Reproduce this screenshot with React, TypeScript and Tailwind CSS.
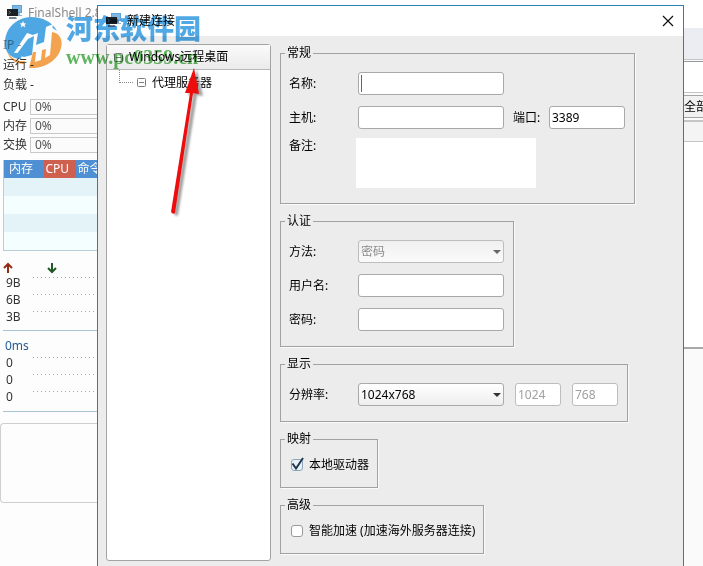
import React, { useState } from "react";

const field =
  "h-[23px] rounded-[3px] border border-[#a9a9a9] bg-white px-[2px] text-xs text-black outline-none disabled:border-[#bdbdbd] disabled:text-[#a0a0a0]";

function AppIcon() {
  return (
    <svg className="h-4 w-4 shrink-0" viewBox="0 0 16 16">
      <rect x="5" y="0" width="10" height="8" fill="#5fa3d6" />
      <rect x="6" y="1" width="8" height="6" fill="#7db7e2" />
      <rect x="0" y="4" width="11" height="7" fill="#1c1f24" />
      <path d="M1.500 6l2 1.500-2 1.500" stroke="#aeb6bd" fill="none" strokeWidth=".6" />
      <path d="M2 12h7l1 2H2z" fill="#77828b" />
      <path d="M11 8h2v2h2v1h-4z" fill="#8fb2cc" />
    </svg>
  );
}

function Meter({ label, value }: { label: string; value: string }) {
  return (
    <div className="flex h-[19px] items-center">
      <span className="w-[27px] shrink-0">{label}</span>
      <span className="h-4 flex-1 border border-r-0 border-[#c9c9c9] bg-[#fbfbfb] pl-1 leading-[14px] text-[#555]">
        {value}
      </span>
    </div>
  );
}

function ScaleRow({ label }: { label: string }) {
  return (
    <div className="flex h-[17px] items-start gap-2 pr-[2px] pl-[3px]">
      <span className="w-[19px] leading-[17px]">{label}</span>
      <svg className="mt-[3px] h-px min-w-0 flex-1">
        <path d="M0 .5h400" stroke="#a8a8a8" strokeDasharray="1 3" />
      </svg>
    </div>
  );
}

function Sidebar() {
  return (
    <aside className="flex w-[97px] shrink-0 flex-col overflow-hidden bg-[#fdfdfd] text-[#333]">
      <div className="flex h-[34px] items-start gap-1 pt-[5px] pl-[7px]">
        <AppIcon />
        <span className="pl-px leading-4 whitespace-nowrap text-[#8a8a8a]">FinalShell 2.8</span>
      </div>
      <div className="flex flex-col pl-[3px]">
        <span className="h-[21px] leading-[21px] text-[#999]">IP -</span>
        <span className="h-5 leading-5">运行 -</span>
        <span className="h-[22px] leading-5">负载 -</span>
        <Meter label="CPU" value="0%" />
        <Meter label="内存" value="0%" />
        <Meter label="交换" value="0%" />
        <table className="mt-[6px] w-[120px] border-collapse border-b border-l border-[#b9cdd6]">
          <thead>
            <tr className="h-[18px] bg-[#4f8fd3] text-left text-white">
              <th className="w-10 p-0 pl-[5px] leading-[18px] font-normal">内存</th>
              <th className="w-8 bg-[#cf5f4f] p-0 pl-[2px] leading-[18px] font-normal">CPU</th>
              <th className="p-0 pl-[2px] leading-[18px] font-normal">命令</th>
            </tr>
          </thead>
          <tbody>
            {[0, 1].map((i) => (
              <React.Fragment key={i}>
                <tr className="h-[18px] bg-[#e3f3f8]">
                  <td colSpan={3} className="p-0" />
                </tr>
                <tr className="h-[18px] bg-[#f5feff]">
                  <td colSpan={3} className="p-0" />
                </tr>
              </React.Fragment>
            ))}
          </tbody>
        </table>
      </div>
      <div className="mt-[11px] flex gap-8 pl-[3px]">
        <svg className="h-3 w-3" viewBox="0 0 12 12" fill="none" stroke="#952a14" strokeWidth="2">
          <path d="M5 11V2M1 6l4-4 4 4" />
        </svg>
        <svg className="h-3 w-3" viewBox="0 0 12 12" fill="none" stroke="#1f5a22" strokeWidth="2">
          <path d="M5 1v9M1 6l4 4 4-4" />
        </svg>
      </div>
      <div className="ml-[3px] flex flex-col border-b border-[#a9c3d3] pb-[5px]">
        <ScaleRow label="9B" />
        <ScaleRow label="6B" />
        <ScaleRow label="3B" />
      </div>
      <div className="ml-[3px] flex flex-col border-b border-[#a9c3d3] pt-[7px] pb-[6px]">
        <span className="pl-[2px] leading-4 text-[#245a94]">0ms</span>
        <ScaleRow label="0" />
        <ScaleRow label="0" />
        <ScaleRow label="0" />
      </div>
      <div className="mt-[11px] h-20 rounded-l-sm border border-r-0 border-[#cfcfcf] bg-[#fdfdfd]" />
    </aside>
  );
}

function Expander() {
  return (
    <svg className="h-[9px] w-[9px] shrink-0" viewBox="0 0 9 9" fill="#fff" stroke="#7c7c7c">
      <rect x=".5" y=".5" width="8" height="8" rx="1" />
      <path d="M2 4.5h5" />
    </svg>
  );
}

function Tree() {
  return (
    <nav className="mb-[5px] flex w-[165px] shrink-0 flex-col rounded-[3px] border border-[#a3a3a3] bg-white">
      <button className="flex h-[25px] items-center gap-[6px] border-b border-[#b8b8b8] bg-linear-to-b from-[#fafafa] to-[#ebebeb] pl-[7px]">
        <Expander />
        Windows远程桌面
      </button>
      <div className="flex h-[25px]">
        <span className="ml-[12px] h-[13px] w-[14px] border-b border-l border-dotted border-[#888]" />
        <button className="ml-1 flex items-center gap-[6px]">
          <Expander />
          代理服务器
        </button>
      </div>
    </nav>
  );
}

function Group({ title, children }: { title: string; children: React.ReactNode }) {
  return (
    <fieldset className="border border-[#a2a2a2] px-1 pb-[15px] shadow-[1px_1px_0_#fafafa]">
      <legend className="px-[2px] leading-4">{title}</legend>
      <div className="flex flex-col gap-[11px] px-1 pt-[11px]">{children}</div>
    </fieldset>
  );
}

function Select({ id, value, disabled }: { id: string; value: string; disabled?: boolean }) {
  return (
    <div className="relative w-[146px]">
      <select
        id={id}
        disabled={disabled}
        className="h-[23px] w-full appearance-none rounded-[3px] border border-[#a9a9a9] bg-linear-to-b from-white to-[#eeeeee] px-[2px] text-xs text-black outline-none disabled:border-[#bdbdbd] disabled:from-[#f0f0f0] disabled:to-[#fafafa] disabled:text-[#8c8c8c] disabled:opacity-100"
      >
        <option>{value}</option>
      </select>
      <svg
        className="pointer-events-none absolute top-[10px] right-[3px] h-1 w-2"
        viewBox="0 0 8 4"
        fill={disabled ? "#666" : "#333"}
      >
        <path d="M0 0h8L4 4z" />
      </svg>
    </div>
  );
}

function Check({ id, label, defaultChecked }: { id: string; label: string; defaultChecked?: boolean }) {
  const [checked, setChecked] = useState(!!defaultChecked);
  return (
    <div className="flex h-[14px] items-center gap-[6px] pl-[2px]">
      <span className="relative h-3 w-3 shrink-0">
        <input
          id={id}
          type="checkbox"
          checked={checked}
          onChange={(e) => setChecked(e.target.checked)}
          className="block h-3 w-3 appearance-none rounded-[3px] border border-[#9a9a9a] bg-white checked:border-[#8ba6bd] checked:bg-[#e9f1f7]"
        />
        {checked && (
          <svg className="pointer-events-none absolute -top-[2px] left-0 h-[14px] w-[14px]" viewBox="0 0 14 14">
            <path d="M1.5 6.5l3.5 5 7-10.500" fill="none" stroke="#22384d" strokeWidth="2" />
          </svg>
        )}
      </span>
      <label htmlFor={id} className="whitespace-nowrap">
        {label}
      </label>
    </div>
  );
}

function ConnectionForm() {
  return (
    <form className="mt-px flex flex-1 flex-col items-start gap-[9px]">
      <Group title="常规">
        <div className="flex items-center">
          <label htmlFor="name" className="w-[69px]">名称:</label>
          <div className="relative">
            <input id="name" type="text" className={`${field} block w-[146px]`} />
            <span className="absolute top-[3px] left-[3px] h-[17px] w-px bg-[#666]" />
          </div>
        </div>
        <div className="flex items-center pr-px">
          <label htmlFor="host" className="w-[69px]">主机:</label>
          <input id="host" type="text" className={`${field} w-[146px]`} />
          <label htmlFor="port" className="ml-[9px] w-9">端口:</label>
          <input id="port" type="text" defaultValue="3389" className={`${field} w-[76px]`} />
        </div>
        <div className="-mt-[2px] flex">
          <label htmlFor="note" className="w-[67px]">备注:</label>
          <textarea id="note" className="h-[50px] w-[180px] resize-none bg-white outline-none" />
        </div>
      </Group>
      <Group title="认证">
        <div className="flex items-center">
          <label htmlFor="method" className="w-[69px]">方法:</label>
          <Select id="method" value="密码" disabled />
        </div>
        <div className="flex items-center">
          <label htmlFor="user" className="w-[69px]">用户名:</label>
          <input id="user" type="text" className={`${field} w-[146px]`} />
        </div>
        <div className="flex items-center pr-px">
          <label htmlFor="password" className="w-[69px]">密码:</label>
          <input id="password" type="password" className={`${field} w-[146px]`} />
        </div>
      </Group>
      <Group title="显示">
        <div className="flex items-center gap-[11px] pr-px">
          <div className="flex items-center">
            <label htmlFor="resolution" className="w-[69px]">分辨率:</label>
            <Select id="resolution" value="1024x768" />
          </div>
          <input aria-label="宽" disabled defaultValue="1024" className={`${field} w-[46px]`} />
          <input aria-label="高" disabled defaultValue="768" className={`${field} w-[46px]`} />
        </div>
      </Group>
      <Group title="映射">
        <Check id="drive" label="本地驱动器" defaultChecked />
      </Group>
      <Group title="高级">
        <Check id="boost" label="智能加速 (加速海外服务器连接)" />
      </Group>
    </form>
  );
}

function Dialog() {
  return (
    <section className="mt-[5px] flex min-w-0 flex-1 flex-col border border-b-0 border-[#2580b8] bg-[#ececec]">
      <header className="flex h-[30px] shrink-0 items-center bg-white pr-[9px] pl-2">
        <AppIcon />
        <h1 className="flex-1 pl-[5px]">新建连接</h1>
        <button aria-label="关闭">
          <svg className="h-3 w-3" viewBox="0 0 12 12" stroke="#111" strokeWidth="1.2">
            <path d="M1 1l10 10M11 1L1 11" />
          </svg>
        </button>
      </header>
      <div className="flex flex-1 gap-[9px] pt-2 pl-2">
        <Tree />
        <ConnectionForm />
      </div>
    </section>
  );
}

function BackgroundPane() {
  return (
    <div className="flex w-[19px] shrink-0 flex-col overflow-hidden bg-[#fafafa]">
      <div className="h-7 bg-white" />
      <div className="h-8 border-b border-[#c4c4c4] bg-[#ebedf2]" />
      <div className="mt-px h-8 border-y border-t-[#9a9a9a] border-b-[#c4c4c4] bg-white" />
      <button className="mt-[2px] flex h-[23px] items-center border-y border-[#a5a5a5] bg-[#f1f1f1] whitespace-nowrap text-black">
        全部
      </button>
      <div className="mt-[2px] h-[22px] border-t-2 border-b border-t-[#c6c6c6] border-b-[#c6c6c6] bg-[#f4f4f4]" />
      <div className="h-[207px] border-b-2 border-[#a8a8a8] bg-white" />
    </div>
  );
}

function Watermark() {
  return (
    <div className="pointer-events-none absolute top-[14px] left-0 flex items-start opacity-90 mix-blend-multiply">
      <svg className="h-14 w-[66px]" viewBox="0 14 66 56">
        {/* blue sweep over the top, then down the left side */}
        <path
          d="M5 46C4 29 15 18 31 17C43 17 52 22 57 31C52 27 50 27 48 27L44 46L35 49L36 36L27 33L14 53L22 53L21 59C12 59 6 53 5 46Z"
          fill="#3a9fe2"
        />
        <path d="M30 36L38 33L36 45L44 42L46 27L53 24L49 53L42 55L43 47L35 50L34 60L26 61Z" fill="#fff" />
        <path d="M28 39L34 36L32 55L24 57L16 55Z" fill="#3a9fe2" />
        {/* orange swoosh on the right */}
        <path
          d="M52 32C60 33 63 40 61 48C58 60 45 69 29 68L33 52L36 52L35 62L41 60L42 50L46 49L45 58L50 55Z"
          fill="#f49a3c"
        />
        <path d="M7 51C10 58 17 62 25 61L24 64C15 64 9 59 7 51Z" fill="#f49a3c" />
        <path d="M23 21l1 2.200 2.400.2-1.800 1.600.6 2.400-2.200-1.300-2.100 1.300.5-2.400-1.800-1.600 2.400-.2z" fill="#fff" />
      </svg>
      <div className="flex flex-col gap-[3px]">
        <span className="text-[27px] leading-[30px] font-black text-[#3d9fe3]">河东软件园</span>
        <span className="font-['Liberation_Serif',serif] text-xl leading-5 font-bold text-[#4fae4d]">
          www.pc0359.cn
        </span>
      </div>
    </div>
  );
}

function Arrow() {
  return (
    <svg className="pointer-events-none absolute top-[66px] left-[166px] h-[154px] w-11" viewBox="166 66 44 154">
      <defs>
        <filter id="soft" x="-50%" y="-10%" width="200%" height="120%">
          <feGaussianBlur stdDeviation="1.2" />
        </filter>
      </defs>
      <path
        d="M194 68L200 94L194 93L175 213Q173 215 171 212L190 93L185 93Z"
        fill="#444"
        opacity=".5"
        filter="url(#soft)"
        transform="translate(3 2)"
      />
      <path d="M194 68L199 94L193 93L175 213Q173 215 171 212L190 93L185 93Z" fill="#ee0c0c" />
    </svg>
  );
}

export default function App() {
  return (
    <main className="relative flex min-h-screen overflow-hidden bg-white font-['Noto_Sans','Noto_Sans_CJK_SC',sans-serif] text-xs leading-4 text-black">
      <Sidebar />
      <Dialog />
      <BackgroundPane />
      <Watermark />
      <Arrow />
    </main>
  );
}
